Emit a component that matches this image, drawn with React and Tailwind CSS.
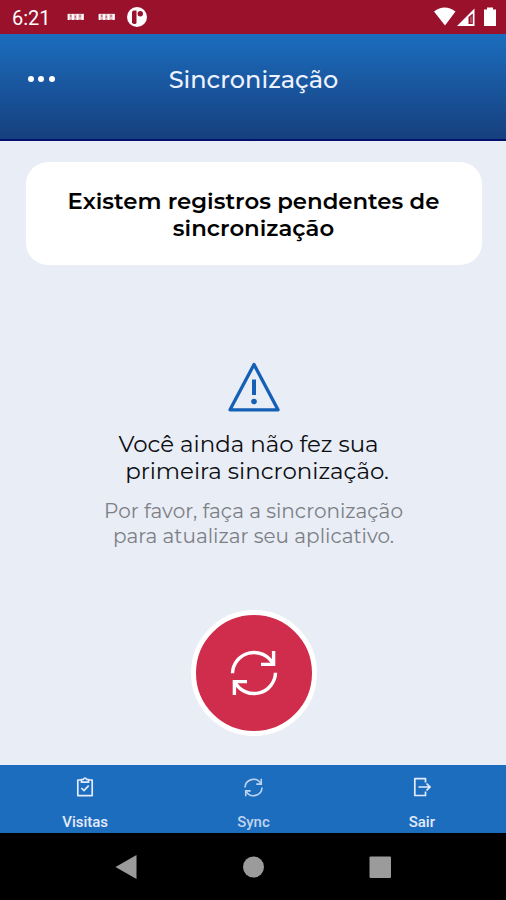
function SyncArrows({ className, strokeWidth = 3.4 }) {
  return (
    <svg viewBox="0 0 48 48" fill="none" stroke="currentColor" strokeWidth={strokeWidth} className={className}>
      <path d="M2.5 24.2A21.5 21.5 0 0 1 42.6 14.2" />
      <path d="M43.6 2v13.4H31" />
      <path d="M45.5 23.8A21.5 21.5 0 0 1 5.4 33.8" />
      <path d="M4.4 46V32.6H17" />
    </svg>
  );
}

function ClipboardIcon() {
  return (
    <svg viewBox="0 0 18 20" fill="none" stroke="currentColor" strokeWidth="1.7" className="w-[18px] h-5">
      <path d="M5.5 3H1.8v15.6h14.400V3h-3.700" strokeLinejoin="round" />
      <path d="M5.500 5.200V2.500h1.700Q9-.5 10.800 2.500h1.700v2.700z" />
      <path d="M5.300 11l2.700 2.600 4.700-5" />
    </svg>
  );
}

function ExitIcon() {
  return (
    <svg viewBox="0 0 18 20" fill="none" stroke="currentColor" strokeWidth="1.7" className="w-[18px] h-5">
      <path d="M12.500 5.500v-3.900H1.800v16.900h10.700v-4" strokeLinejoin="round" />
      <path d="M5.500 10H17M13.500 6.500L17 10l-3.500 3.500" />
    </svg>
  );
}

function WarningIcon() {
  return (
    <svg viewBox="0 0 54 52" className="w-[54px] h-[52px]">
      <path d="M27 3.500L51 48.800H3z" fill="none" stroke="#1560b7" strokeWidth="3.300" strokeLinejoin="round" />
      <path d="M27 18.500v15.500" stroke="#1560b7" strokeWidth="4" />
      <circle cx="27" cy="40.500" r="2.800" fill="#1560b7" />
    </svg>
  );
}

function StatusBadge() {
  return (
    <svg viewBox="0 0 18 8" className="w-[18px] h-2">
      <rect x="1" y=".8" width="16" height="6" fill="#fff" opacity=".72" />
      <path d="M1.500 1v6M6 1v6M10.500 1v6M15.500 1v6" stroke="#fff" strokeWidth="1.800" />
      <path d="M3.700 2v2M8.300 3v2M13 2v2" stroke="#99112b" opacity=".6" />
    </svg>
  );
}

function StatusBar() {
  return (
    <div className="h-[34px] bg-[#99112b] flex items-center pl-3 pr-[9px] text-white">
      <span className="w-[38px] pt-0.5 font-[Roboto] text-[20px] leading-none whitespace-nowrap">6:21</span>
      <div className="ml-[17px] flex items-center gap-[13px]">
        <StatusBadge />
        <StatusBadge />
      </div>
      <svg viewBox="0 0 20 20" className="ml-[11px] w-5 h-5">
        <circle cx="10" cy="10" r="10" fill="#fff" />
        <path d="M5 5.500q0-2 2-2h2.500v12q0 1.500-2 1.500T5 15.500z" fill="#99112b" />
        <circle cx="13.300" cy="6.800" r="2.700" fill="#99112b" />
      </svg>
      <svg viewBox="0 0 63 20" className="ml-auto w-[63px] h-5">
        <path d="M0 4.500Q10.500-3.500 21.500 4.500L11 18.500z" fill="#fff" />
        <path d="M40.500 1.500V19H23z" fill="#fff" />
        <path d="M38.800 6.500V17h-4.300v-7z" fill="#99112b" />
        <path d="M37 9.500V16" stroke="#fff" strokeWidth=".8" opacity=".6" />
        <path d="M50 2.500h3V.5h6v2h3V19H50z" fill="#fff" />
      </svg>
    </div>
  );
}

const TABS = [
  { label: "Visitas", icon: <ClipboardIcon />, color: "text-[#e3ebfb]" },
  { label: "Sync", icon: <SyncArrows className="w-[19px] h-[19px]" strokeWidth={4} />, color: "text-[#bfd3f0]" },
  { label: "Sair", icon: <ExitIcon />, color: "text-[#e3ebfb]" },
];

export default function App() {
  return (
    <div className="w-full h-screen flex flex-col overflow-hidden bg-[#e9edf5] font-[Montserrat,Inter,sans-serif]">
      <StatusBar />

      {/* Header */}
      <header className="h-[107px] border-b-2 border-[#020f6b] bg-linear-to-b from-[#1b6dbe] to-[#16407f] grid grid-cols-3 items-start">
        <button className="pl-[27.5px] pt-[42px] flex gap-[4.5px]" aria-label="Menu">
          <span className="size-[6px] rounded-full bg-white" />
          <span className="size-[6px] rounded-full bg-white" />
          <span className="size-[6px] rounded-full bg-white" />
        </button>
        <h1 className="pt-[30px] text-center text-[24px] leading-8 font-medium text-[#eef2ff]">Sincronização</h1>
      </header>

      {/* Content */}
      <main className="flex-1 flex flex-col items-center pl-px">
        <section className="mt-[21px] w-[456px] h-[103px] rounded-[22px] bg-white flex items-center justify-center text-center">
          <p className="pt-0.5 text-[22.8px] leading-[27px] font-semibold text-black whitespace-nowrap">
            Existem registros pendentes de
            <br />
            sincronização
          </p>
        </section>

        <div className="mt-24">
          <WarningIcon />
        </div>

        <div className="mt-[18px] text-center text-[22.9px] leading-[27px] text-[#0c0e12] whitespace-nowrap">
          <p className="pr-[10px]">Você ainda não fez sua</p>
          <p className="pl-[7px]">primeira sincronização.</p>
        </div>

        <p className="mt-[14px] text-center text-[20px] leading-[24.5px] text-[#7c7f86] whitespace-nowrap">
          Por favor, faça a sincronização
          <br />
          para atualizar seu aplicativo.
        </p>

        <button
          className="mt-[61.5px] size-[126px] rounded-full border-[5.5px] border-white bg-[#d02d4c] flex items-center justify-center text-white"
          aria-label="Sincronizar"
        >
          <SyncArrows className="w-[48px] h-[48px]" />
        </button>
      </main>

      {/* Tab bar */}
      <nav className="h-[68px] bg-[#1d6dbf] grid grid-cols-3 pl-px">
        {TABS.map((tab) => (
          <div key={tab.label} className={`flex flex-col items-center pt-3 ${tab.color}`}>
            <div className="h-5 flex items-center">{tab.icon}</div>
            <span className="mt-[15px] font-[Roboto] font-medium text-[15px] leading-5">{tab.label}</span>
          </div>
        ))}
      </nav>

      {/* System navigation */}
      <div className="h-[67px] bg-black flex justify-center gap-[105px] pt-[22px] text-[#9b9b9b]">
        <svg viewBox="0 0 22 24" className="w-[22px] h-6" fill="currentColor">
          <path d="M21.5 0v24L.5 12z" />
        </svg>
        <svg viewBox="0 0 22 24" className="w-[22px] h-6" fill="currentColor">
          <circle cx="11.5" cy="12" r="10.5" />
        </svg>
        <svg viewBox="0 0 22 24" className="w-[22px] h-6" fill="currentColor">
          <rect x=".5" y="1.5" width="21.5" height="21.5" rx="1" />
        </svg>
      </div>
    </div>
  );
}
